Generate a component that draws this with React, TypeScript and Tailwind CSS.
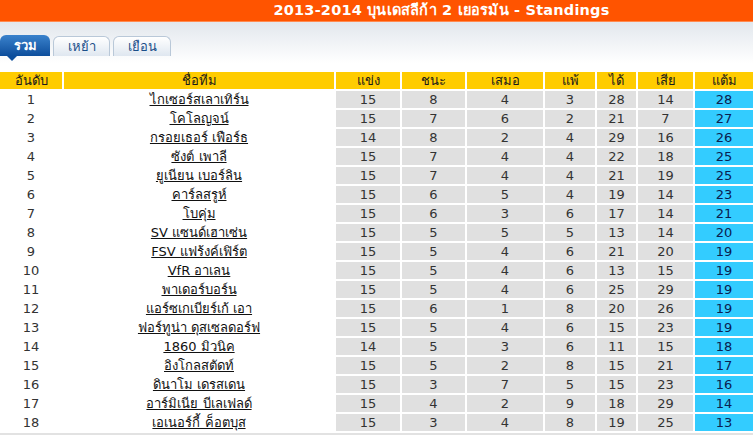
import React from "react";

type Row = [number, string, number, number, number, number, number, number, number];

const rows: Row[] = [
  [1, "ไกเซอร์สเลาเทิร์น", 15, 8, 4, 3, 28, 14, 28],
  [2, "โคโลญจน์", 15, 7, 6, 2, 21, 7, 27],
  [3, "กรอยเธอร์ เฟือร์ธ", 14, 8, 2, 4, 29, 16, 26],
  [4, "ซังต์ เพาลี", 15, 7, 4, 4, 22, 18, 25],
  [5, "ยูเนียน เบอร์ลิน", 15, 7, 4, 4, 21, 19, 25],
  [6, "คาร์ลสรูห์", 15, 6, 5, 4, 19, 14, 23],
  [7, "โบคุ่ม", 15, 6, 3, 6, 17, 14, 21],
  [8, "SV แซนด์เฮาเซ่น", 15, 5, 5, 5, 13, 14, 20],
  [9, "FSV แฟร้งค์เฟิร์ต", 15, 5, 4, 6, 21, 20, 19],
  [10, "VfR อาเลน", 15, 5, 4, 6, 13, 15, 19],
  [11, "พาเดอร์บอร์น", 15, 5, 4, 6, 25, 29, 19],
  [12, "แอร์ซเกเบียร์เก้ เอา", 15, 6, 1, 8, 20, 26, 19],
  [13, "ฟอร์ทูน่า ดุสเซลดอร์ฟ", 15, 5, 4, 6, 15, 23, 19],
  [14, "1860 มิวนิค", 14, 5, 3, 6, 11, 15, 18],
  [15, "อิงโกลสตัดท์", 15, 5, 2, 8, 15, 21, 17],
  [16, "ดินาโม เดรสเดน", 15, 3, 7, 5, 15, 23, 16],
  [17, "อาร์มิเนีย บีเลเฟลด์", 15, 4, 2, 9, 18, 29, 14],
  [18, "เอเนอร์กี้ ค็อตบุส", 15, 3, 4, 8, 19, 25, 13],
];

const headers = ["อันดับ", "ชื่อทีม", "แข่ง", "ชนะ", "เสมอ", "แพ้", "ได้", "เสีย", "แต้ม"];

const cols = "grid grid-cols-[62px_270px_64px_63px_76px_50px_39px_55px_58px] gap-[2px]";

export default function App() {
  return (
    <div className="w-[753px] h-[438px] overflow-hidden bg-white font-['Tahoma','DejaVu_Sans','Noto_Sans',sans-serif] text-[13px] text-[#1a1a1a]">
      <div className="h-[22px] bg-[#ff5400] border-b border-[#ff8a50] flex items-center justify-center pl-[130px] text-white font-bold text-[14.5px] tracking-[0.2px]">
        2013-2014 บุนเดสลีก้า 2 เยอรมัน - Standings
      </div>

      <div className="h-[41px] bg-gradient-to-b from-[#e2e7ed] to-white pt-[13px]">
        <div className="flex items-end gap-[3px] h-[21px]">
          <div className="relative w-[50px] h-[21px] rounded-t-[6px] bg-gradient-to-b from-[#3a82cc] to-[#0c4e9c] text-white font-bold flex items-center justify-center">
            รวม
            <span className="absolute left-[7px] top-full w-0 h-0 border-l-[5px] border-r-[5px] border-t-[5px] border-l-transparent border-r-transparent border-t-[#0c4e9c]" />
          </div>
          <div className="w-[57px] h-[20px] rounded-t-[6px] border border-b-0 border-[#b9c8d8] bg-gradient-to-b from-white to-[#dfe7f0] text-[#1b4f8a] flex items-center justify-center">
            เหย้า
          </div>
          <div className="w-[58px] h-[20px] rounded-t-[6px] border border-b-0 border-[#b9c8d8] bg-gradient-to-b from-white to-[#dfe7f0] text-[#1b4f8a] flex items-center justify-center">
            เยือน
          </div>
        </div>
      </div>

      <div className="mt-[9px]">
        <div className={cols}>
          {headers.map((h) => (
            <div key={h} className="h-[17px] bg-[#ffcc00] flex items-center justify-center leading-none">
              {h}
            </div>
          ))}
        </div>
        <div className={`${cols} mt-[2px]`}>
          {rows.map((r) => (
            <React.Fragment key={r[0]}>
              <div className="h-[17px] flex items-center justify-center leading-none text-[#333]">{r[0]}</div>
              <div className="h-[17px] flex items-center justify-center leading-none">
                <a href="#" className="underline text-[#111]">
                  {r[1]}
                </a>
              </div>
              {r.slice(2, 8).map((v, i) => (
                <div key={i} className="h-[17px] bg-[#e0e0e0] flex items-center justify-center leading-none text-[#333]">
                  {v}
                </div>
              ))}
              <div className="h-[17px] bg-[#33ccff] flex items-center justify-center leading-none text-[#0a2050]">
                {r[8]}
              </div>
            </React.Fragment>
          ))}
        </div>
        <div className="mt-[2px] h-[2px] bg-[#e2e2e2]" />
      </div>
    </div>
  );
}
